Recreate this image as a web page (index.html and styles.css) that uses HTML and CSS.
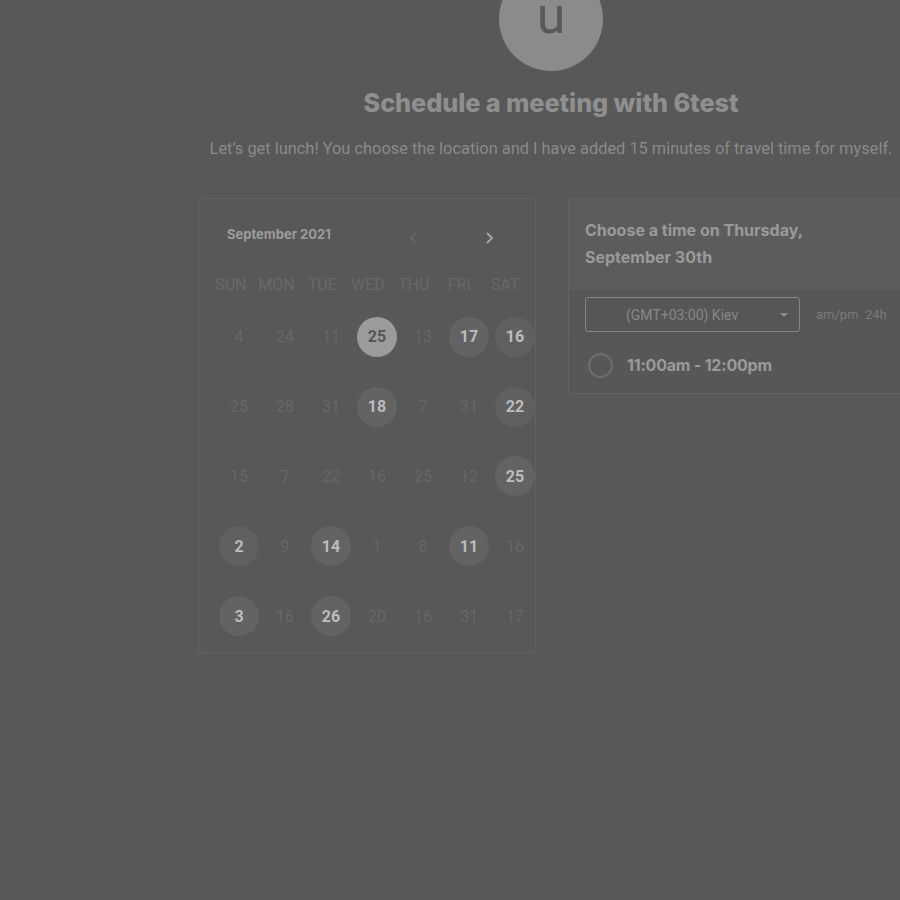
FILE: index.html
```html
<!DOCTYPE html>
<html>
<head>
<meta charset="utf-8">
<link rel="stylesheet" href="styles.css">
</head>
<body>
<div class="wrap">
  <div class="avatar"><span>u</span></div>
  <h1 class="title">Schedule a meeting with 6test</h1>
  <p class="subtitle">Let’s get lunch! You choose the location and I have added 15 minutes of travel time for myself.</p>
  <div class="panels">
    <div class="calendar">
      <div class="cal-head">
        <span class="month">September 2021</span>
        <span class="nav">
          <svg class="chev prev" width="14" height="14" viewBox="0 0 14 14"><path d="M9 2 L4 7 L9 12" fill="none" stroke="currentColor" stroke-width="1.8"/></svg>
          <svg class="chev next" width="14" height="14" viewBox="0 0 14 14"><path d="M5 2 L10 7 L5 12" fill="none" stroke="currentColor" stroke-width="1.8"/></svg>
        </span>
      </div>
      <div class="weekdays">
        <span>SUN</span><span>MON</span><span>TUE</span><span>WED</span><span>THU</span><span>FRI</span><span>SAT</span>
      </div>
      <div class="days">
        <span class="d">4</span><span class="d">24</span><span class="d">11</span><span class="d sel">25</span><span class="d">13</span><span class="d av">17</span><span class="d av dot">16</span>
        <span class="d">25</span><span class="d">28</span><span class="d">31</span><span class="d av">18</span><span class="d">7</span><span class="d">31</span><span class="d av dot">22</span>
        <span class="d">15</span><span class="d">7</span><span class="d">22</span><span class="d">16</span><span class="d">25</span><span class="d">12</span><span class="d av">25</span>
        <span class="d av dot">2</span><span class="d">9</span><span class="d av">14</span><span class="d">1</span><span class="d">8</span><span class="d av">11</span><span class="d">16</span>
        <span class="d av">3</span><span class="d">16</span><span class="d av">26</span><span class="d">20</span><span class="d">16</span><span class="d">31</span><span class="d">17</span>
      </div>
    </div>
    <div class="times">
      <div class="times-head">Choose a time on Thursday, September 30th</div>
      <div class="tz-row">
        <div class="tz-select"><span>(GMT+03:00) Kiev</span><span class="caret"></span></div>
        <div class="fmt">am/pm&nbsp; 24h</div>
      </div>
      <div class="slot">
        <span class="radio"></span>
        <span class="slot-text">11:00am - 12:00pm</span>
      </div>
    </div>
  </div>
</div>
</body>
</html>
```
FILE: styles.css
```css
html, body {
  margin: 0;
  padding: 0;
  background: #585858;
  overflow: hidden;
  height: 900px;
}
.wrap {
  margin-left: 198px;
  width: 706px;
  display: flex;
  flex-direction: column;
  align-items: center;
  font-family: Roboto, "Liberation Sans", sans-serif;
}
.avatar {
  width: 104px;
  height: 104px;
  margin-top: -33px;
  border-radius: 50%;
  background: #8b8b8b;
  display: flex;
  align-items: center;
  justify-content: center;
}
.avatar span {
  font-family: Roboto, sans-serif;
  font-size: 52px;
  line-height: 52px;
  color: #595959;
  margin-top: -6px;
}
.title {
  margin: 17px 0 0;
  font-family: Inter, "Liberation Sans", sans-serif;
  font-weight: 800;
  font-size: 25.3px;
  line-height: 30px;
  color: #8f8f8f;
  letter-spacing: -0.1px;
}
.subtitle {
  margin: 21px 0 0;
  font-size: 16.4px;
  line-height: 20px;
  color: #8a8a8a;
  white-space: nowrap;
}
.panels {
  margin-top: 39px;
  align-self: stretch;
  display: flex;
  align-items: flex-start;
  gap: 32px;
}
.calendar {
  box-sizing: border-box;
  width: 338px;
  height: 455px;
  border: 1px solid #626262;
  border-radius: 3px;
  flex: none;
}
.cal-head {
  height: 71px;
  display: flex;
  align-items: center;
  padding-left: 28px;
}
.month {
  font-family: Inter, sans-serif;
  font-weight: 700;
  font-size: 13px;
  color: #9c9c9c;
  margin-top: -1px;
}
.nav {
  margin-left: auto;
  display: flex;
  gap: 61px;
  margin-right: 39px;
  margin-top: 7px;
}
.chev.prev { color: #686868; }
.chev.next { color: #a8a8a8; }
.weekdays {
  display: grid;
  grid-template-columns: repeat(7, 45.7px);
  padding-left: 9px;
  height: 28px;
  align-items: center;
  text-align: center;
  font-size: 16px;
  color: #686868;
}
.days {
  margin-top: 4px;
  display: grid;
  grid-template-columns: repeat(7, 46px);
  grid-auto-rows: 69.8px;
  padding-left: 17px;
}
.d {
  justify-self: center;
  align-self: center;
  width: 40px;
  height: 40px;
  border-radius: 50%;
  display: flex;
  align-items: center;
  justify-content: center;
  font-size: 16px;
  color: #676767;
}
.d.av {
  background: #636363;
  color: #bcbcbc;
  font-weight: 700;
}
.d.dot {
  background: #606060;
}
.d.sel {
  background: #9b9b9b;
  color: #565656;
  font-weight: 700;
}
.times {
  box-sizing: border-box;
  width: 340px;
  border: 1px solid #626262;
  border-right: none;
  border-radius: 3px 0 0 3px;
  flex: none;
  background: #565656;
}
.times-head {
  background: #5c5c5c;
  padding: 18px 60px 19px 16px;
  font-family: Inter, sans-serif;
  font-weight: 700;
  font-size: 16px;
  line-height: 27px;
  color: #9a9a9a;
  height: 54px;
}
.tz-row {
  display: flex;
  align-items: center;
  padding: 7px 0 7px 16px;
}
.tz-select {
  box-sizing: border-box;
  width: 215px;
  height: 35px;
  border: 1px solid #858585;
  border-radius: 3px;
  display: flex;
  align-items: center;
  position: relative;
  font-size: 14px;
  color: #888;
}
.tz-select span:first-child {
  margin-left: 40px;
}
.caret {
  position: absolute;
  right: 11px;
  top: 15px;
  width: 0;
  height: 0;
  border-left: 4px solid transparent;
  border-right: 4px solid transparent;
  border-top: 4px solid #8c8c8c;
}
.fmt {
  margin-left: 16px;
  font-size: 13px;
  color: #7a7a7a;
}
.slot {
  display: flex;
  align-items: center;
  height: 52px;
  padding-bottom: 2px;
  padding-left: 19px;
  background: #575757;
}
.radio {
  box-sizing: border-box;
  width: 25px;
  height: 25px;
  border: 2px solid #6e6e6e;
  border-radius: 50%;
}
.slot-text {
  margin-left: 14px;
  font-family: Inter, sans-serif;
  font-weight: 700;
  font-size: 16px;
  color: #9a9a9a;
  letter-spacing: -0.2px;
}
```
